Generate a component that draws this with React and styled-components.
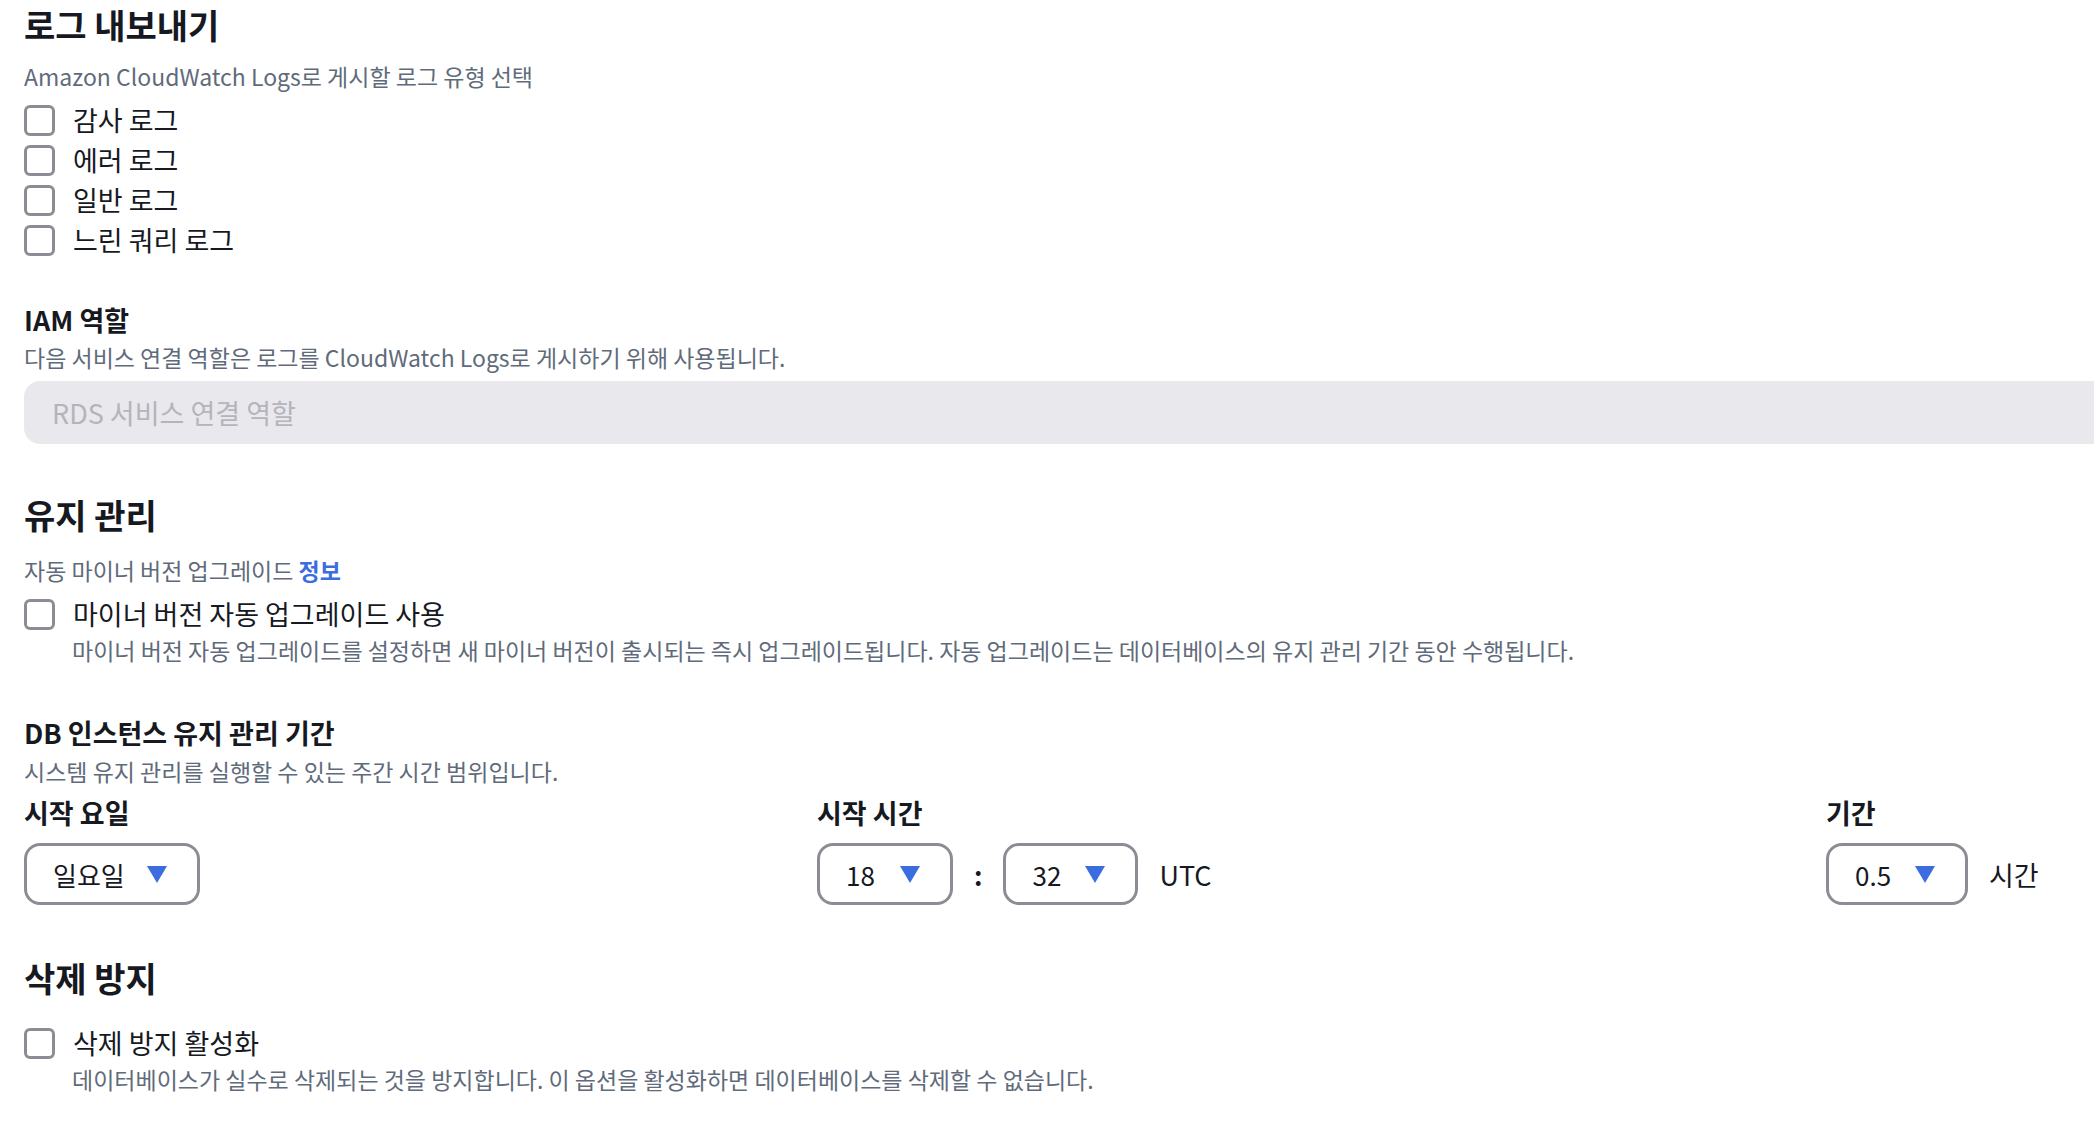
import React from 'react';
import styled, { createGlobalStyle } from 'styled-components';

const GlobalStyle = createGlobalStyle`
  html, body {
    margin: 0;
    padding: 0;
    background: #ffffff;
    overflow-x: hidden;
  }
  body {
    font-family: 'Noto Sans CJK KR', 'Noto Sans', sans-serif;
    color: #16191f;
  }
`;

const Page = styled.div`
  padding: 0 0 40px 24px;
  overflow: hidden;
`;

const Section = styled.section`
  display: flex;
  flex-direction: column;
  margin-top: ${(p) => p.$top || 0}px;
`;

const Heading = styled.h2`
  margin: 0;
  font-size: 34px;
  line-height: 50px;
  font-weight: 700;
`;

const FieldLabel = styled.div`
  margin-top: ${(p) => p.$top || 0}px;
  font-size: 27px;
  line-height: 40px;
  font-weight: 700;
`;

const Description = styled.p`
  margin: ${(p) => p.$top || 0}px 0 0 ${(p) => p.$indent || 0}px;
  font-size: 23px;
  line-height: 32px;
  color: #5f6b7a;
`;

const InfoLink = styled.a`
  color: #3b6de0;
  font-weight: 700;
  text-decoration: none;
`;

const CheckList = styled.div`
  display: flex;
  flex-direction: column;
  margin-top: ${(p) => p.$top || 0}px;
`;

const CheckRow = styled.label`
  display: flex;
  align-items: center;
  gap: 18px;
  height: 40px;
  font-size: 27px;
  line-height: 40px;
`;

const Box = styled.span`
  width: 31px;
  height: 31px;
  box-sizing: border-box;
  border: 3px solid #8c8c94;
  border-radius: 6px;
  background: #ffffff;
  flex-shrink: 0;
`;

const RoleInput = styled.div`
  margin-top: 8px;
  width: calc(100% + 60px);
  height: 63px;
  box-sizing: border-box;
  padding-left: 28px;
  display: flex;
  align-items: center;
  background: #e9e8ed;
  border-radius: 16px;
  font-size: 27px;
  color: #b4b4bb;
`;

const WindowGrid = styled.div`
  display: grid;
  grid-template-columns: 793px 1009px 1fr;
  margin-top: 6px;
`;

const Column = styled.div`
  display: flex;
  flex-direction: column;
  gap: 10px;
`;

const Controls = styled.div`
  display: flex;
  align-items: center;
  gap: 21px;
  font-size: 27px;
`;

const SelectBox = styled.div`
  width: ${(p) => p.$w}px;
  height: 62px;
  box-sizing: border-box;
  border: 3px solid #8c8c94;
  border-radius: 16px;
  padding: 0 30px 0 26px;
  display: flex;
  align-items: center;
  justify-content: space-between;
  font-size: 26px;
  color: #16191f;
`;

const Caret = styled.svg`
  width: 20px;
  height: 17px;
  flex-shrink: 0;
`;

const Colon = styled.span`
  font-size: 26px;
  font-weight: 700;
`;

const Select = ({ value, width }) => (
  <SelectBox $w={width}>
    <span>{value}</span>
    <Caret viewBox="0 0 20 17">
      <path d="M0 0 H20 L10 17 Z" fill="#3b6de0" />
    </Caret>
  </SelectBox>
);

const Checkbox = ({ children }) => (
  <CheckRow>
    <Box />
    {children}
  </CheckRow>
);

const App = () => {
  return (
    <Page>
      <GlobalStyle />
      <Section>
        <Heading>로그 내보내기</Heading>
        <Description $top={10}>Amazon CloudWatch Logs로 게시할 로그 유형 선택</Description>
        <CheckList $top={8}>
          <Checkbox>감사 로그</Checkbox>
          <Checkbox>에러 로그</Checkbox>
          <Checkbox>일반 로그</Checkbox>
          <Checkbox>느린 쿼리 로그</Checkbox>
        </CheckList>
        <FieldLabel $top={40}>IAM 역할</FieldLabel>
        <Description $top={1}>다음 서비스 연결 역할은 로그를 CloudWatch Logs로 게시하기 위해 사용됩니다.</Description>
        <RoleInput>RDS 서비스 연결 역할</RoleInput>
      </Section>

      <Section $top={46}>
        <Heading>유지 관리</Heading>
        <Description $top={14}>
          자동 마이너 버전 업그레이드 <InfoLink href="#">정보</InfoLink>
        </Description>
        <CheckList $top={8}>
          <Checkbox>마이너 버전 자동 업그레이드 사용</Checkbox>
        </CheckList>
        <Description $indent={48}>
          마이너 버전 자동 업그레이드를 설정하면 새 마이너 버전이 출시되는 즉시 업그레이드됩니다. 자동 업그레이드는 데이터베이스의 유지 관리 기간 동안 수행됩니다.
        </Description>
        <FieldLabel $top={47}>DB 인스턴스 유지 관리 기간</FieldLabel>
        <Description $top={2}>시스템 유지 관리를 실행할 수 있는 주간 시간 범위입니다.</Description>
        <WindowGrid>
          <Column>
            <FieldLabel>시작 요일</FieldLabel>
            <Controls>
              <Select value="일요일" width={176} />
            </Controls>
          </Column>
          <Column>
            <FieldLabel>시작 시간</FieldLabel>
            <Controls>
              <Select value="18" width={136} />
              <Colon>:</Colon>
              <Select value="32" width={135} />
              <span>UTC</span>
            </Controls>
          </Column>
          <Column>
            <FieldLabel>기간</FieldLabel>
            <Controls>
              <Select value="0.5" width={142} />
              <span>시간</span>
            </Controls>
          </Column>
        </WindowGrid>
      </Section>

      <Section $top={48}>
        <Heading>삭제 방지</Heading>
        <CheckList $top={20}>
          <Checkbox>삭제 방지 활성화</Checkbox>
        </CheckList>
        <Description $indent={48}>
          데이터베이스가 실수로 삭제되는 것을 방지합니다. 이 옵션을 활성화하면 데이터베이스를 삭제할 수 없습니다.
        </Description>
      </Section>
    </Page>
  );
};

export default App;
